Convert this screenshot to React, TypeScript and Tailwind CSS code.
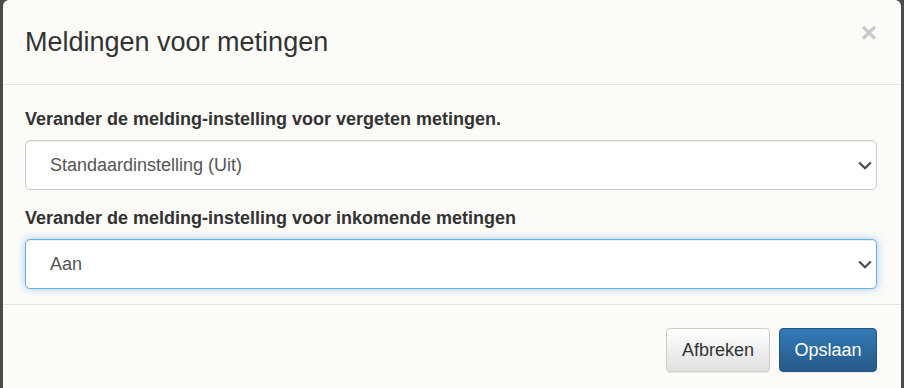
function SelectBox({ value, focused }: { value: string; focused?: boolean }) {
  return (
    <div
      className={
        "flex h-[50px] items-center justify-between rounded-[5px] border bg-white pl-[24px] pr-[4px] text-[18px] text-[#555] " +
        (focused
          ? "border-[#66afe9] shadow-[inset_0_1px_1px_rgba(0,0,0,0.075),0_0_8px_rgba(102,175,233,0.6)]"
          : "border-[#ccc] shadow-[inset_0_1px_1px_rgba(0,0,0,0.075)]")
      }
    >
      <span>{value}</span>
      <svg width="14" height="9" viewBox="0 0 14 9" className="mt-[1px]">
        <polyline points="1.2,1.5 7,7.2 12.8,1.5" fill="none" stroke="#4a4a4a" strokeWidth="2.2" />
      </svg>
    </div>
  );
}

export default function App() {
  return (
    <div
      className="flex h-[388px] w-[904px] overflow-hidden bg-[#4b4b4b] pl-[3px] pr-[3px]"
      style={{ fontFamily: '"Liberation Sans", Arial, sans-serif' }}
    >
      <div className="flex h-[420px] flex-1 flex-col rounded-t-[6px] bg-[#fcfbf8] text-[#333]">
        <div className="flex h-[85px] items-center justify-between border-b border-[#e5e5e5] pl-[22px] pr-[24px]">
          <h4 className="text-[27px] leading-none">Meldingen voor metingen</h4>
          <span className="mt-[-18px] text-[28px] font-bold leading-none text-[#c8c8c8]">×</span>
        </div>

        <div className="flex flex-col border-b border-[#e5e5e5] pb-[15px] pl-[22px] pr-[24px] pt-[24px]">
          <label className="mb-[11px] text-[18px] font-bold leading-[20px]">
            Verander de melding-instelling voor vergeten metingen.
          </label>
          <SelectBox value="Standaardinstelling (Uit)" />
          <label className="mb-[11px] mt-[18px] text-[18px] font-bold leading-[20px]">
            Verander de melding-instelling voor inkomende metingen
          </label>
          <SelectBox value="Aan" focused />
        </div>

        <div className="flex justify-end gap-[9px] pl-[22px] pr-[24px] pt-[23px]">
          <button className="h-[44px] w-[104px] rounded-[4px] border border-[#ccc] bg-gradient-to-b from-white to-[#e0e0e0] text-[18px] text-[#333] shadow-[0_1px_1px_rgba(0,0,0,0.075)]">
            Afbreken
          </button>
          <button className="h-[44px] w-[98px] rounded-[4px] border border-[#245580] bg-gradient-to-b from-[#337ab7] to-[#265a88] text-[18px] text-white shadow-[0_1px_1px_rgba(0,0,0,0.075)]">
            Opslaan
          </button>
        </div>
      </div>
    </div>
  );
}
